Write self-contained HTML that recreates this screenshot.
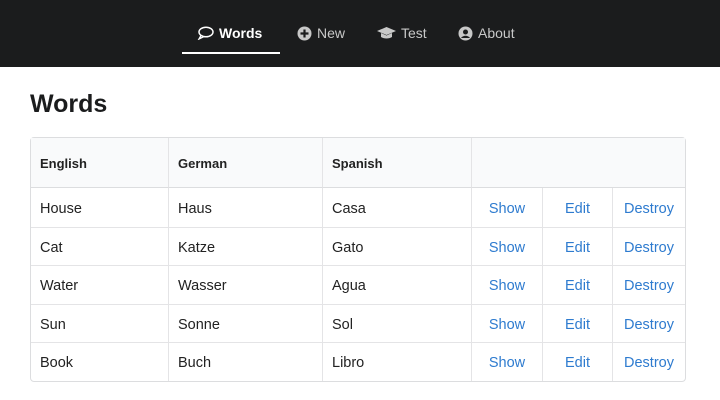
<!DOCTYPE html>
<html><head><style>
*{margin:0;padding:0;box-sizing:border-box}
body{width:720px;height:400px;background:#fff;font-family:"Liberation Sans",sans-serif;color:#222;overflow:hidden;position:relative}
.nav{position:absolute;left:0;top:0;width:720px;height:67px;background:#1b1c1d}
.ni{position:absolute;top:25px;font-size:14px;color:#c8c8c8;display:flex;align-items:center;gap:5px}
.ni.a{color:#fff;font-weight:bold}
.ul{position:absolute;left:182px;top:52px;width:98px;height:2px;background:#fff}
h1{position:absolute;left:30px;top:90px;font-size:25px;font-weight:bold;color:#1b1c1d}
table{position:absolute;left:30px;top:137px;width:656px;border-collapse:separate;border-spacing:0;border:1px solid #dcdddf;border-radius:4px;font-size:14.5px}
td,th{border-left:1px solid #e4e4e6;border-top:1px solid #e4e4e6;padding:3px 9px 0;height:38.5px;text-align:left}
tr td:first-child,tr th:first-child{border-left:none}
th{background:#f9fafb;height:50px;font-weight:bold;font-size:13px;border-top:none;border-bottom:1px solid #dcdddf;padding-top:2px}
tbody tr:first-child td{border-top:none}
td.l{color:#2e7bcf;text-align:center;padding:3px 4px 0}
</style></head><body>
<div class="nav">
<div class="ni a" style="left:197px"><svg width="17" height="14" viewBox="0 0 17 14"><ellipse cx="9" cy="6" rx="7" ry="4.8" fill="none" stroke="#fff" stroke-width="1.5"/><path d="M4 9.5 L2 13 L7 10.5" fill="none" stroke="#fff" stroke-width="1.3"/></svg>Words</div>
<div class="ni" style="left:297px"><svg width="15" height="15" viewBox="0 0 15 15"><circle cx="7.5" cy="7.5" r="7" fill="#c8c8c8"/><path d="M7.5 3.5v8M3.5 7.5h8" stroke="#1b1c1d" stroke-width="2.2"/></svg>New</div>
<div class="ni" style="left:377px"><svg width="19" height="13" viewBox="0 0 19 13"><path d="M0 4 L9.5 0 L19 4 L9.5 8Z" fill="#c8c8c8"/><path d="M4 6v4c3 2 8 2 11 0V6l-5.5 2.5z" fill="#c8c8c8"/></svg>Test</div>
<div class="ni" style="left:458px"><svg width="15" height="15" viewBox="0 0 15 15"><circle cx="7.5" cy="7.5" r="7" fill="#c8c8c8"/><circle cx="7.5" cy="6" r="2.5" fill="#1b1c1d"/><path d="M3 12c2-3 7-3 9 0" fill="#1b1c1d"/></svg>About</div>
<div class="ul"></div>
</div>
<h1>Words</h1>
<table>
<colgroup><col style="width:137px"><col style="width:154px"><col style="width:149px"><col style="width:71px"><col style="width:70px"><col></colgroup>
<thead><tr><th>English</th><th>German</th><th>Spanish</th><th colspan="3"></th></tr></thead>
<tbody>
<tr><td>House</td><td>Haus</td><td>Casa</td><td class="l">Show</td><td class="l">Edit</td><td class="l">Destroy</td></tr>
<tr><td>Cat</td><td>Katze</td><td>Gato</td><td class="l">Show</td><td class="l">Edit</td><td class="l">Destroy</td></tr>
<tr><td>Water</td><td>Wasser</td><td>Agua</td><td class="l">Show</td><td class="l">Edit</td><td class="l">Destroy</td></tr>
<tr><td>Sun</td><td>Sonne</td><td>Sol</td><td class="l">Show</td><td class="l">Edit</td><td class="l">Destroy</td></tr>
<tr><td>Book</td><td>Buch</td><td>Libro</td><td class="l">Show</td><td class="l">Edit</td><td class="l">Destroy</td></tr>
</tbody></table>
</body></html>
